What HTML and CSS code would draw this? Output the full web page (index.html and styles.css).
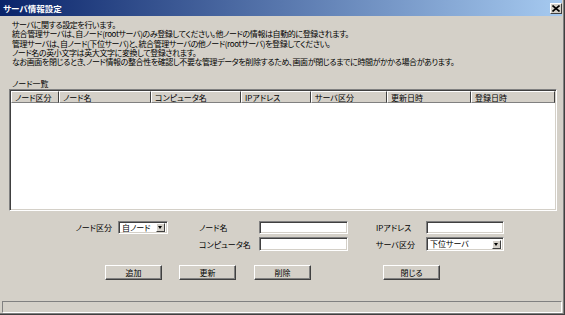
FILE: index.html
```html
<!DOCTYPE html>
<html lang="ja">
<head>
  <meta charset="UTF-8">
  <title>サーバ情報設定</title>
  <link rel="stylesheet" href="styles.css">
</head>
<body>
  <div class="window">
    <!-- Title bar -->
    <div class="titlebar">
      <span class="title">サーバ情報設定</span>
      <span class="close">
        <svg width="8" height="7" viewBox="0 0 8 7"><path d="M0.5 0.5 L7.5 6.5 M7.5 0.5 L0.5 6.5" stroke="#000" stroke-width="1.6"/></svg>
      </span>
    </div>

    <div class="content">
      <!-- Description -->
      <div class="desc">
        <p>サーバに関する設定を行います。</p>
        <p>統合管理サーバは、自ノード(rootサーバ)のみ登録してください。他ノードの情報は自動的に登録されます。</p>
        <p>管理サーバは、自ノード(下位サーバ)と、統合管理サーバの他ノード(rootサーバ)を登録してください。</p>
        <p>ノード名の英小文字は英大文字に変換して登録されます。</p>
        <p>なお画面を閉じるとき、ノード情報の整合性を確認し不要な管理データを削除するため、画面が閉じるまでに時間がかかる場合があります。</p>
      </div>

      <!-- Node list -->
      <div class="list-label">ノード一覧</div>
      <div class="list">
        <div class="list-head">
          <div class="col c1">ノード区分</div>
          <div class="col c2">ノード名</div>
          <div class="col c3">コンピュータ名</div>
          <div class="col c4">IPアドレス</div>
          <div class="col c5">サーバ区分</div>
          <div class="col c6">更新日時</div>
          <div class="col c7">登録日時</div>
        </div>
        <div class="list-body"></div>
      </div>

      <!-- Form -->
      <div class="form">
        <label class="lbl right">ノード区分</label>
        <div class="select"><span class="value">自ノード</span><span class="arrow"></span></div>
        <span></span>
        <label class="lbl">ノード名</label>
        <div class="input"></div>
        <span></span>
        <label class="lbl">IPアドレス</label>
        <div class="input"></div>

        <span></span>
        <span></span>
        <span></span>
        <label class="lbl">コンピュータ名</label>
        <div class="input"></div>
        <span></span>
        <label class="lbl">サーバ区分</label>
        <div class="select"><span class="value">下位サーバ</span><span class="arrow"></span></div>
      </div>

      <!-- Buttons -->
      <div class="actions">
        <button class="btn">追加</button>
        <button class="btn">更新</button>
        <button class="btn">削除</button>
        <button class="btn close-btn">閉じる</button>
      </div>
    </div>

    <div class="statusbar"></div>
  </div>
</body>
</html>
```

FILE: styles.css
```css
/* Reset */
* {
  margin: 0;
  padding: 0;
  box-sizing: border-box;
}

body {
  background: #d4d0c8;
  font-family: "Noto Sans CJK JP", "Noto Sans", sans-serif;
  font-size: 8px;
  font-feature-settings: "palt";
  color: #000;
}

/* Window */
.window {
  width: 565px;
  height: 315px;
  display: flex;
  flex-direction: column;
  background: #d4d0c8;
  border-right: 1px solid #404040;
  border-bottom: 1px solid #404040;
  box-shadow: inset -1px -1px 0 #808080;
}

/* Title bar */
.titlebar {
  height: 16px;
  margin-right: 2px;
  display: flex;
  align-items: center;
  justify-content: space-between;
  padding: 0 0 0 3px;
  background: linear-gradient(to right, #0a246a, #a6caf0);
}

.title {
  color: #fff;
  font-weight: bold;
  font-size: 8.5px;
  line-height: 16px;
}

.close {
  width: 12px;
  height: 11px;
  display: flex;
  align-items: center;
  justify-content: center;
  background: #d4d0c8;
  border-top: 1px solid #fff;
  border-left: 1px solid #fff;
  border-right: 1px solid #404040;
  border-bottom: 1px solid #404040;
}

/* Content */
.content {
  padding: 0 0 0 12px;
}

.desc {
  margin-top: 4px;
  line-height: 9.3px;
  letter-spacing: -0.4px;
  white-space: nowrap;
}

.list-label {
  margin-top: 12px;
  line-height: 11px;
}

/* List */
.list {
  width: 548px;
  height: 122px;
  margin-left: -3px;
  border-top: 1px solid #808080;
  border-left: 1px solid #808080;
  border-right: 1px solid #fff;
  border-bottom: 1px solid #fff;
  box-shadow: inset 1px 1px 0 #404040, inset -1px -1px 0 #d4d0c8;
  padding: 1px;
  display: flex;
  flex-direction: column;
}

.list-head {
  display: flex;
  height: 12px;
  flex: none;
}

.col {
  height: 12px;
  line-height: 11px;
  padding-left: 3px;
  background: #d4d0c8;
  border-top: 1px solid #fff;
  border-left: 1px solid #fff;
  border-right: 1px solid #404040;
  border-bottom: 1px solid #808080;
  white-space: nowrap;
  overflow: hidden;
}

.c1 { width: 48px; }
.c2 { width: 92px; }
.c3 { width: 90px; }
.c4 { width: 70px; }
.c5 { width: 76px; }
.c6 { width: 84px; }
.c7 { flex: 1; }

.list-body {
  flex: 1;
  background: #fff;
}

/* Form */
.form {
  margin-top: 10px;
  margin-left: 48px;
  display: grid;
  grid-template-columns: 58px 50px 31px 60px 89px 28px 50px 78px;
  grid-template-rows: 13px 14px;
  row-gap: 3px;
  align-items: center;
}

.lbl {
  white-space: nowrap;
  line-height: 13px;
}

.right {
  text-align: right;
  padding-right: 6px;
}

.input,
.select {
  height: 100%;
  background: #fff;
  border-top: 1px solid #808080;
  border-left: 1px solid #808080;
  border-right: 1px solid #fff;
  border-bottom: 1px solid #fff;
  box-shadow: inset 1px 1px 0 #404040, inset -1px -1px 0 #d4d0c8;
}

.select {
  display: flex;
  align-items: center;
  justify-content: space-between;
  padding: 2px 2px 2px 3px;
  line-height: 10px;
}

.arrow {
  width: 9px;
  height: 9px;
  background: #d4d0c8;
  border-top: 1px solid #fff;
  border-left: 1px solid #fff;
  border-right: 1px solid #404040;
  border-bottom: 1px solid #404040;
  position: relative;
}

.arrow::after {
  content: "";
  position: absolute;
  left: 1px;
  top: 2px;
  border-left: 2.5px solid transparent;
  border-right: 2.5px solid transparent;
  border-top: 3px solid #000;
}

/* Buttons */
.actions {
  margin-top: 14px;
  margin-left: 93px;
  display: flex;
  gap: 17px;
}

.btn {
  width: 57px;
  height: 15px;
  font-family: inherit;
  font-size: 8px;
  font-feature-settings: "palt";
  line-height: 11px;
  background: #d4d0c8;
  color: #000;
  border-top: 1px solid #fff;
  border-left: 1px solid #fff;
  border-right: 1px solid #404040;
  border-bottom: 1px solid #404040;
  box-shadow: inset -1px -1px 0 #808080;
}

.btn:nth-child(3) {
  margin-left: 1px;
}

.close-btn {
  margin-left: 55px;
}

/* Status bar */
.statusbar {
  margin: auto 2px 1px 2px;
  height: 12px;
  border-top: 1px solid #808080;
  border-left: 1px solid #808080;
  border-right: 1px solid #fff;
  border-bottom: 1px solid #fff;
}
```
